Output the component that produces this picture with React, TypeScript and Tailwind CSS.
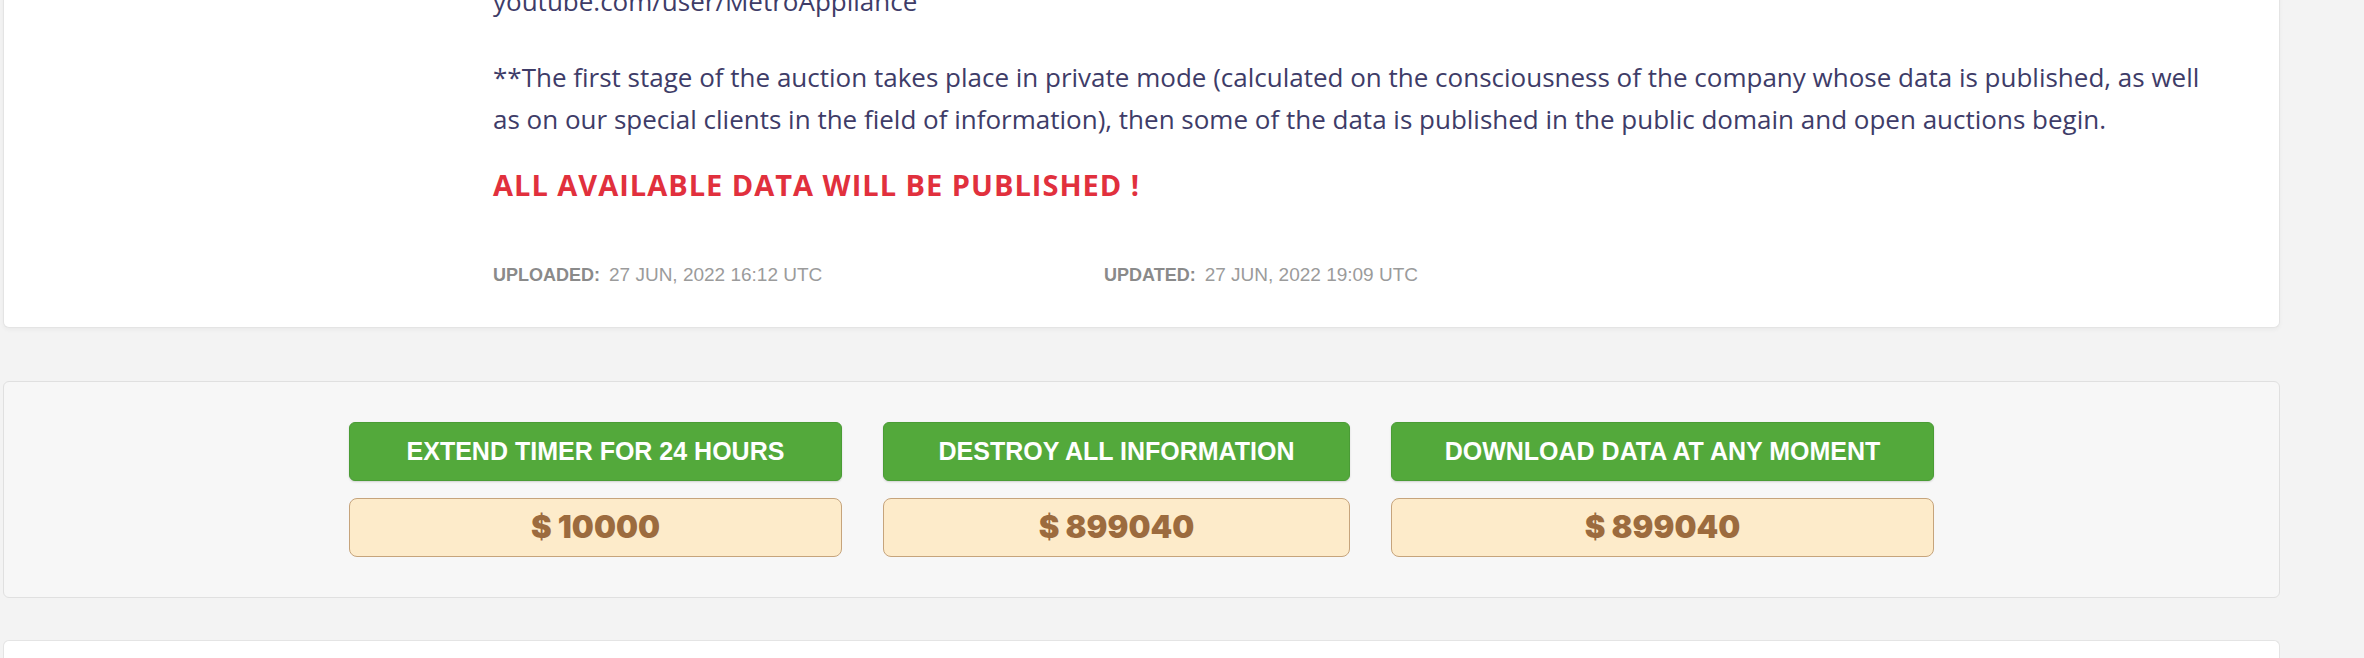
const actions = [
  { label: 'EXTEND TIMER FOR 24 HOURS', price: '$ 10000', width: 'w-[493px]' },
  { label: 'DESTROY ALL INFORMATION', price: '$ 899040', width: 'w-[467px]' },
  { label: 'DOWNLOAD DATA AT ANY MOMENT', price: '$ 899040', width: 'w-[543px]' },
]

function MetaItem({ label, value, className }: { label: string; value: string; className?: string }) {
  return (
    <div className={`flex items-baseline gap-[9px] ${className ?? ''}`}>
      <span className="text-[18px] font-bold text-[#8a8a8a]">{label}</span>
      <span className="text-[19px] text-[#9b9b9b]">{value}</span>
    </div>
  )
}

function PostCard() {
  return (
    <div className="-mt-[20px] rounded-b-md border border-t-0 border-[#e4e4e4] bg-white pb-[40px] pl-[489px] pr-[60px] shadow-[0_2px_4px_rgba(0,0,0,0.04)]">
      <div className="font-['Open_Sans',sans-serif] text-[26px] leading-[42px] text-[#3e3c68]">
        <p className="mb-[34px]">youtube.com/user/MetroAppliance</p>
        <p>
          **The first stage of the auction takes place in private mode (calculated on the consciousness of the
          company whose data is published, as well as on our special clients in the field of information), then
          some of the data is published in the public domain and open auctions begin.
        </p>
      </div>

      <h3 className="mt-[27px] font-['Open_Sans',sans-serif] text-[29px] font-bold leading-[36px] tracking-[1px] text-[#e1303d]">
        ALL AVAILABLE DATA WILL BE PUBLISHED !
      </h3>

      <div className="mt-[60px] flex font-['Liberation_Sans',Arial,sans-serif] leading-[24px]">
        <MetaItem label="UPLOADED:" value="27 JUN, 2022 16:12 UTC" className="w-[611px]" />
        <MetaItem label="UPDATED:" value="27 JUN, 2022 19:09 UTC" />
      </div>
    </div>
  )
}

function ActionPanel() {
  return (
    <div className="mt-[53px] flex justify-center gap-[41px] rounded-md border border-[#e0e0e0] bg-[#f7f7f7] py-[40px]">
      {actions.map((a) => (
        <div key={a.label} className={`flex flex-col gap-[17px] ${a.width}`}>
          <button className="h-[59px] rounded-[6px] border border-[#4a9c35] bg-[#53a93b] font-['Liberation_Sans',Arial,sans-serif] text-[25px] font-bold text-white shadow-[0_1px_2px_rgba(0,0,0,0.15)]">
            {a.label}
          </button>
          <div className="flex h-[59px] items-center justify-center rounded-[8px] border-[1.5px] border-[#c6a47c] bg-[#fdebca] font-['Inter',sans-serif] text-[31px] font-black text-[#9c6b3e]">
            {a.price}
          </div>
        </div>
      ))}
    </div>
  )
}

export default function App() {
  return (
    <div className="h-[658px] overflow-hidden bg-[#f3f3f3]">
      <div className="ml-[3px] w-[2277px]">
        <PostCard />
        <ActionPanel />
        <div className="mt-[42px] h-[60px] rounded-t-md border border-b-0 border-[#e4e4e4] bg-white" />
      </div>
    </div>
  )
}
